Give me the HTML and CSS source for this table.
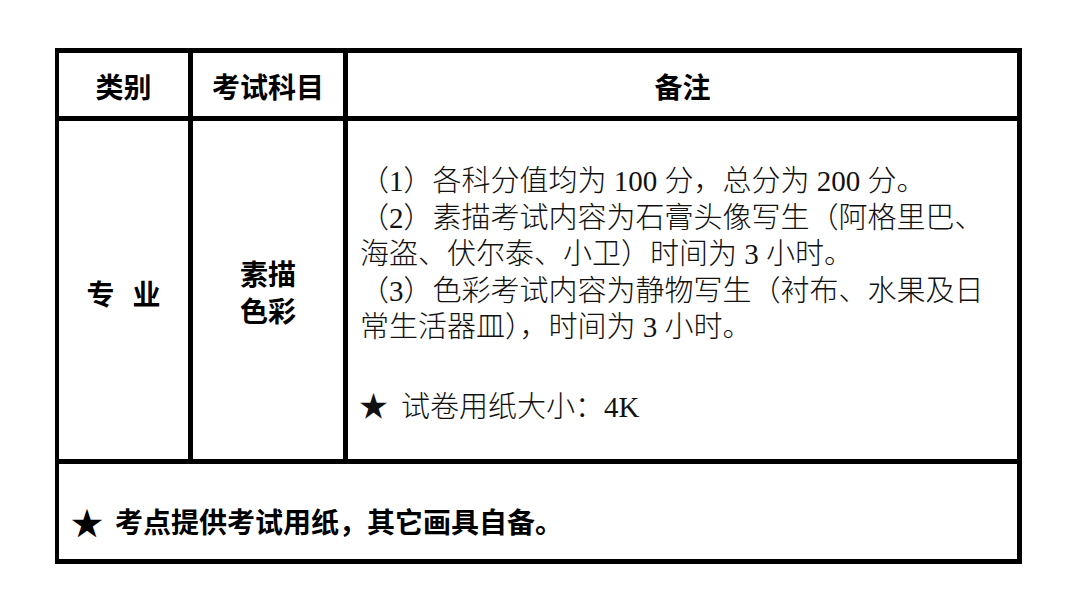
FILE: index.html
```html
<!DOCTYPE html>
<html lang="zh-CN">
<head>
<meta charset="utf-8">
<title>考试科目</title>
<link rel="stylesheet" href="styles.css">
</head>
<body>
<div class="sheet">
  <div class="cell head">类别</div>
  <div class="cell head">考试科目</div>
  <div class="cell head">备注</div>

  <div class="cell cat"><span>专</span><span>业</span></div>
  <div class="cell subj"><div>素描</div><div>色彩</div></div>
  <div class="cell notes">
    <div class="line">（1）各科分值均为 100 分，总分为 200 分。</div>
    <div class="line">（2）素描考试内容为石膏头像写生（阿格里巴、</div>
    <div class="line">海盗、伏尔泰、小卫）时间为 3 小时。</div>
    <div class="line">（3）色彩考试内容为静物写生（衬布、水果及日</div>
    <div class="line">常生活器皿），时间为 3 小时。</div>
    <div class="line paper"><span class="star">★</span>试卷用纸大小：4K</div>
  </div>

  <div class="cell foot"><span class="star">★</span>考点提供考试用纸，其它画具自备。</div>
</div>
</body>
</html>
```

FILE: styles.css
```css
html, body {
  margin: 0;
  padding: 0;
  background: #fff;
}

body {
  font-family: "Noto Sans CJK SC", "Noto Sans", sans-serif;
  color: #000;
}

.sheet {
  margin: 48px 0 0 55px;
  width: 967px;
  height: 516px;
  box-sizing: border-box;
  background: #000;
  padding: 5px 5px 5px 4px;
  display: grid;
  grid-template-columns: 129px 150px 669px;
  grid-template-rows: 63px 338px 95px;
  gap: 5px;
}

.cell {
  background: #fff;
}

.head {
  display: flex;
  align-items: center;
  justify-content: center;
  font-weight: 700;
  font-size: 28px;
  padding-top: 2px;
  box-sizing: border-box;
}

.cat {
  display: flex;
  align-items: center;
  justify-content: center;
  gap: 18px;
  font-weight: 700;
  font-size: 28px;
  padding-top: 5px;
  box-sizing: border-box;
}

.subj {
  display: flex;
  flex-direction: column;
  align-items: center;
  justify-content: center;
  font-weight: 700;
  font-size: 28px;
  line-height: 37px;
  padding-top: 3px;
  box-sizing: border-box;
}

.notes {
  padding: 42px 0 0 12px;
  box-sizing: border-box;
  font-family: "Liberation Serif", "Noto Sans CJK SC", serif;
  font-size: 29px;
  line-height: 36.5px;
  font-weight: 300;
  color: #111;
}

.line {
  white-space: nowrap;
}

.paper {
  margin-top: 40px;
}

.notes .star {
  font-family: "Noto Sans CJK SC", sans-serif;
  font-size: 29px;
  display: inline-block;
  width: 42px;
  margin-left: -1px;
}

.foot {
  grid-column: 1 / 4;
  display: flex;
  align-items: center;
  padding: 18px 0 0 12px;
  box-sizing: border-box;
  font-weight: 700;
  font-size: 28px;
}

.foot .star {
  display: inline-block;
  width: 44px;
  font-size: 32px;
}
```
